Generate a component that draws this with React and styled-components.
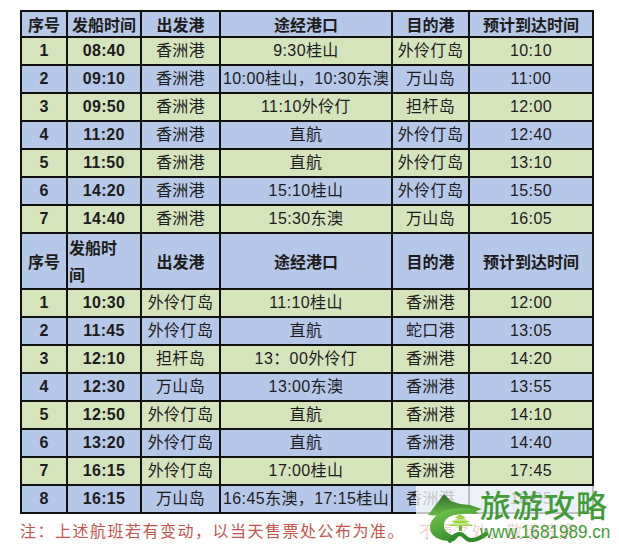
import React from 'react';
import styled, { createGlobalStyle } from 'styled-components';

const GlobalStyle = createGlobalStyle`
    html, body {
        margin: 0;
        padding: 0;
        background: #ffffff;
    }
`;

// 颜色
const GREEN = '#d6e4bc';
const BLUE = '#b6c8e8';

const Page = styled.div`
    position: relative;
    width: 619px;
    height: 551px;
    box-sizing: border-box;
    padding: 10px 0 0 20px;
    background: #ffffff;
    font-family: 'Liberation Sans', 'Noto Sans CJK SC', sans-serif;
    overflow: hidden;
`;

const Table = styled.table`
    border-collapse: collapse;
    table-layout: fixed;
    width: 574px;
    color: #1c1c1c;
`;

const Row = styled.tr`
    height: ${(p) => p.$h}px;
    background: ${(p) => (p.$tone === 'green' ? GREEN : BLUE)};
`;

const HeadCell = styled.th`
    border: 2px solid #111;
    padding: 0 1px;
    font-family: 'Noto Sans CJK SC', sans-serif;
    font-size: 16px;
    font-weight: 700;
    line-height: ${(p) => (p.$wrap ? '27px' : '20px')};
    text-align: ${(p) => (p.$wrap ? 'left' : 'center')};
    vertical-align: middle;
    white-space: nowrap;
`;

const Cell = styled.td`
    border: 2px solid #111;
    padding: 0;
    font-size: 16px;
    font-weight: ${(p) => (p.$bold ? 700 : 400)};
    letter-spacing: ${(p) => (p.$bold ? '0.3px' : '0.4px')};
    line-height: 20px;
    text-align: center;
    vertical-align: middle;
    white-space: nowrap;
`;

const Note = styled.div`
    margin-top: 4px;
    font-family: 'Liberation Serif', 'Noto Sans CJK SC', serif;
    font-size: 16px;
    letter-spacing: 1.5px;
    color: #c4554d;
    white-space: nowrap;
`;

const NoteTail = styled.span`
    margin-left: 14px;
`;

// 水印（压在表格上）
const Watermark = styled.div`
    position: absolute;
    left: 412px;
    top: 484px;
    display: flex;
    align-items: flex-start;
`;

const Haze = styled.div`
    position: absolute;
    left: 4px;
    top: 2px;
    width: 186px;
    height: 52px;
    background: rgba(255, 255, 255, 0.74);
`;

const Logo = styled.svg`
    position: relative;
    flex: none;
    width: 84px;
    height: 66px;
    margin-left: -2px;
`;

const BrandText = styled.div`
    position: relative;
    margin-left: -14px;
    display: flex;
    flex-direction: column;
    color: #3f9b36;
`;

const BrandName = styled.div`
    font-family: 'Noto Sans CJK SC', sans-serif;
    font-size: 31px;
    font-weight: 500;
    line-height: 40px;
    letter-spacing: 1px;
`;

const BrandUrl = styled.div`
    font-family: 'Liberation Sans', sans-serif;
    font-size: 19px;
    line-height: 20px;
    margin-top: -2px;
    transform: scaleX(0.9);
    transform-origin: left center;
    white-space: nowrap;
`;

const outbound = [
    ['1', '08:40', '香洲港', '9:30桂山', '外伶仃岛', '10:10'],
    ['2', '09:10', '香洲港', '10:00桂山，10:30东澳', '万山岛', '11:00'],
    ['3', '09:50', '香洲港', '11:10外伶仃', '担杆岛', '12:00'],
    ['4', '11:20', '香洲港', '直航', '外伶仃岛', '12:40'],
    ['5', '11:50', '香洲港', '直航', '外伶仃岛', '13:10'],
    ['6', '14:20', '香洲港', '15:10桂山', '外伶仃岛', '15:50'],
    ['7', '14:40', '香洲港', '15:30东澳', '万山岛', '16:05'],
];

const inbound = [
    ['1', '10:30', '外伶仃岛', '11:10桂山', '香洲港', '12:00'],
    ['2', '11:45', '外伶仃岛', '直航', '蛇口港', '13:05'],
    ['3', '12:10', '担杆岛', '13：00外伶仃', '香洲港', '14:20'],
    ['4', '12:30', '万山岛', '13:00东澳', '香洲港', '13:55'],
    ['5', '12:50', '外伶仃岛', '直航', '香洲港', '14:10'],
    ['6', '13:20', '外伶仃岛', '直航', '香洲港', '14:40'],
    ['7', '16:15', '外伶仃岛', '17:00桂山', '香洲港', '17:45'],
    ['8', '16:15', '万山岛', '16:45东澳，17:15桂山', '香洲港', '18:05'],
];

const widths = [46, 74, 79, 172, 77, 124];

const Header = ({ height, wrapTime }) => (
    <Row $tone="blue" $h={height}>
        <HeadCell>序号</HeadCell>
        {wrapTime ? (
            <HeadCell $wrap>
                发船时
                <br />间
            </HeadCell>
        ) : (
            <HeadCell>发船时间</HeadCell>
        )}
        <HeadCell>出发港</HeadCell>
        <HeadCell>途经港口</HeadCell>
        <HeadCell>目的港</HeadCell>
        <HeadCell>预计到达时间</HeadCell>
    </Row>
);

const DataRows = ({ rows }) =>
    rows.map((r, i) => (
        <Row key={r[0] + r[1]} $tone={i % 2 === 0 ? 'green' : 'blue'} $h={28}>
            {r.map((v, j) => (
                <Cell key={j} $bold={j < 2}>
                    {v}
                </Cell>
            ))}
        </Row>
    ));

const BrandLogo = () => (
    <Logo viewBox="0 0 84 66">
        <defs>
            <linearGradient id="ring" x1="0" y1="0" x2="0.6" y2="1">
                <stop offset="0" stopColor="#7ccb4e" />
                <stop offset="1" stopColor="#2e8c2a" />
            </linearGradient>
            <linearGradient id="hill" x1="0" y1="0" x2="0" y2="1">
                <stop offset="0" stopColor="#2c6f2a" />
                <stop offset="1" stopColor="#6dbb48" />
            </linearGradient>
        </defs>
        {/* 山 */}
        <path d="M18 31 L28 18 L34 10 L41 17 L50 20 L60 21 L72 25 L62 29 L30 32 Z" fill="url(#hill)" />
        {/* 环 */}
        <path
            d="M64 25 C42 21 22 29 20 42 C19 52 30 58 44 57 L49 52 C39 52 33 47 34 40 C35 32 46 28 68 30 Z"
            fill="url(#ring)"
        />
        {/* 树 */}
        <path
            d="M50 30 L56 34 L53 34 L60 38 L56 38 L64 42 L38 42 L45 38 L41 38 L48 34 L45 34 Z"
            fill="#9ad43e"
        />
        <path d="M42 36 L58 36 M40 40 L61 40" stroke="#ffffff" strokeWidth="0.8" />
        <rect x="49" y="42" width="3" height="5" fill="#6bb536" />
        {/* 尾 */}
        <path
            d="M40 57 C45 49 51 48 55 53 C59 58 66 57 76 50"
            fill="none"
            stroke="#2f8f2a"
            strokeWidth="4"
            strokeLinecap="round"
        />
    </Logo>
);

const App = () => (
    <>
        <GlobalStyle />
        <Page>
            <Table>
                <colgroup>
                    {widths.map((w, i) => (
                        <col key={i} style={{ width: w }} />
                    ))}
                </colgroup>
                <tbody>
                    <Header height={26} />
                    <DataRows rows={outbound} />
                    <Header height={53} wrapTime />
                    <DataRows rows={inbound} />
                </tbody>
            </Table>
            <Note>
                注：上述航班若有变动，以当天售票处公布为准。
                <NoteTail>不便之处，敬请谅解！</NoteTail>
            </Note>
            <Watermark>
                <Haze />
                <BrandLogo />
                <BrandText>
                    <BrandName>旅游攻略</BrandName>
                    <BrandUrl>www.1681989.cn</BrandUrl>
                </BrandText>
            </Watermark>
        </Page>
    </>
);

export default App;
